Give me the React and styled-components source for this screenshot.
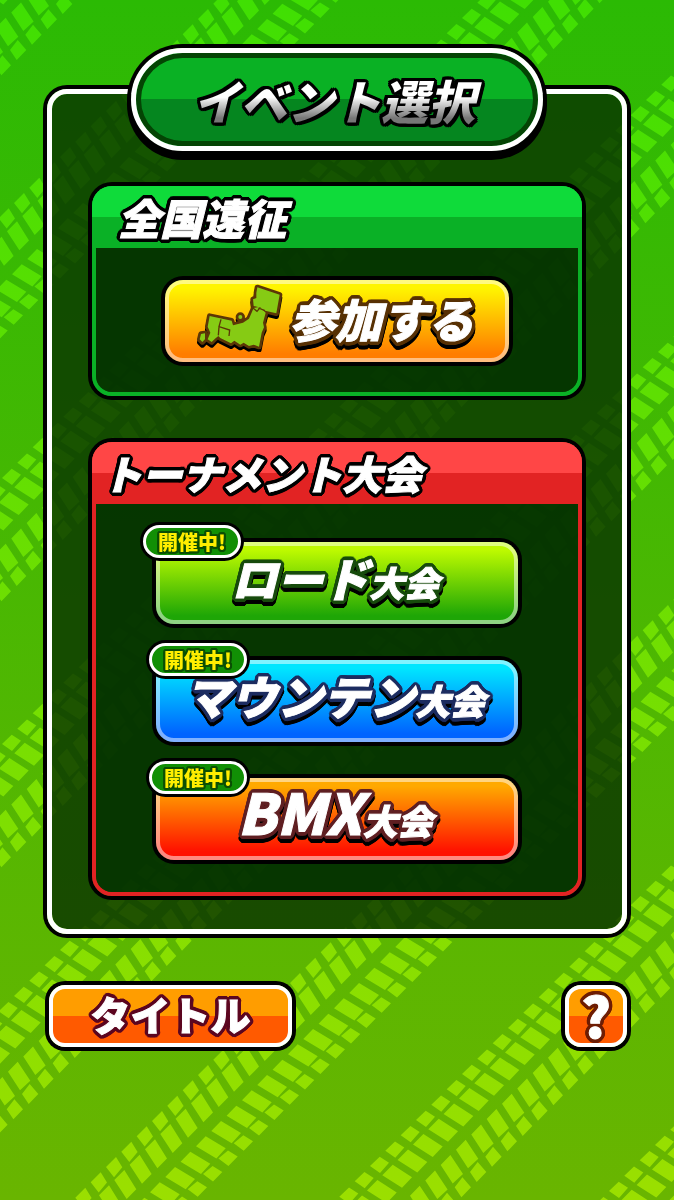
import styled, { createGlobalStyle, css } from 'styled-components';

const GlobalStyle = createGlobalStyle`
    *, *::before, *::after {
        box-sizing: border-box;
    }

    body {
        margin: 0;
        background: #4ab802;
        font-family: "Noto Sans CJK JP", "Noto Sans", sans-serif;
        font-weight: 900;
    }

    button {
        font: inherit;
        cursor: pointer;
    }
`

// ring of hard shadows, gives the text a rounded outline
function ring(radius, color, drop = 0) {
    const circle = (fill, offset) => Array.from({ length: 20 }, (_, i) => {
        const angle = (i / 20) * Math.PI * 2
        const x = (Math.cos(angle) * radius).toFixed(2)
        const y = (Math.sin(angle) * radius + offset).toFixed(2)
        return `${x}px ${y}px 0 ${fill}`
    })
    const shadows = circle(color, 0)
    if (drop) {
        shadows.push(...circle('#000', drop))
    }
    return shadows.join(', ')
}

const Backdrop = styled.svg`
    position: fixed;
    inset: 0;
    width: 100%;
    height: 100%;
    z-index: -1;
`
const Page = styled.main`
    min-height: 100vh;
    display: flex;
    flex-direction: column;
    padding: 48px 47px;
`
const outlined = css`
    color: white;
    -webkit-text-stroke: 1px white;
    text-shadow: ${props => ring(4, props.$outline || '#000', props.$drop)};
    white-space: nowrap;
`
const TitlePlate = styled.header`
    width: 71%;
    height: 103px;
    display: flex;
    align-items: center;
    justify-content: center;
    align-self: center;
    position: relative;
    z-index: 1;
    border: 5px solid white;
    border-radius: 52px;
    background: linear-gradient(#0ab124 50%, #05861f 50%);
    box-shadow: inset 0 0 0 5px #044404, 0 0 0 4px #000, 0 5px 0 4px #000;
`
const PageTitle = styled.h1`
    margin: 0;
    padding: 0 14px 0 8px;
    font-size: 47px;
    font-weight: 900;
    font-style: italic;
    line-height: 52px;
    white-space: nowrap;
    color: transparent;
    background: linear-gradient(#fff 45%, #d8d8d8 55%, #777 85%);
    background-clip: text;
    filter: drop-shadow(2px 0 0 #000) drop-shadow(-2px 0 0 #000) drop-shadow(0 2px 0 #000) drop-shadow(0 -2px 0 #000) drop-shadow(1px 1px 0 #000) drop-shadow(-1px -1px 0 #000);
`
const Panel = styled.section`
    display: flex;
    flex-direction: column;
    gap: 46px;
    margin-top: -62px;
    padding: 92px 40px 33px;
    border: 5px solid white;
    border-radius: 20px;
    background: rgba(7, 49, 0, 0.8);
    background-clip: padding-box;
    box-shadow: 0 0 0 4px #000;
`
const Card = styled.section`
    border: 4px solid ${props => props.$color};
    border-radius: 20px;
    box-shadow: 0 0 0 4px #000;
`
const CardHeader = styled.div`
    height: 62px;
    display: flex;
    align-items: center;
    margin: -4px -4px 0;
    padding-left: ${props => props.$indent}px;
    border-radius: 20px 20px 0 0;
    background: linear-gradient(${props => props.$light} 50%, ${props => props.$dark} 50%);
`
const CardTitle = styled.h2`
    ${outlined}
    margin: 0;
    font-size: ${props => props.$size}px;
    font-weight: 900;
    font-style: italic;
    line-height: 48px;
`
const CardBody = styled.div`
    display: flex;
    flex-direction: column;
    gap: 36px;
    padding: ${props => props.$wide ? '38px 60px 32px' : '32px 69px 30px'};
    border-radius: 0 0 16px 16px;
    background: rgba(3, 50, 0, 0.8);
`
const EventButton = styled.button`
    width: 100%;
    height: 82px;
    display: flex;
    align-items: center;
    justify-content: center;
    gap: 7px;
    position: relative;
    padding: 0 4px 7px 0;
    border: 4px solid rgba(255, 255, 255, 0.5);
    border-radius: 18px;
    background: linear-gradient(${props => props.$from} 10%, ${props => props.$to} 90%) border-box;
    box-shadow: 0 0 0 4px #000;
`
const EventLabel = styled.span`
    ${outlined}
    font-size: ${props => props.$size || 46}px;
    font-style: italic;
    line-height: 60px;
`
const Small = styled.small`
    font-size: 35px;
`
const Badge = styled.span`
    position: absolute;
    top: -21px;
    left: ${props => props.$left}px;
    width: 98px;
    height: 33px;
    display: flex;
    align-items: center;
    justify-content: center;
    border: 3px solid white;
    border-radius: 17px;
    background: #118f05;
    box-shadow: 0 0 0 3px #000;
    color: #ffee00;
    font-size: 20px;
    line-height: 24px;
    text-shadow: ${ring(2, '#0b4f05')};
`
const Footer = styled.footer`
    display: flex;
    justify-content: space-between;
    margin-top: 51px;
    padding-left: 2px;
`
const FooterButton = styled.button`
    width: ${props => props.$width}px;
    height: 62px;
    display: flex;
    align-items: center;
    justify-content: center;
    padding: 0 0 4px;
    border: 4px solid white;
    border-radius: 16px;
    background: linear-gradient(#ff9d00 50%, #ff5a00 50%);
    box-shadow: 0 0 0 4px #000;
`
const FooterLabel = styled.span`
    ${outlined}
    font-size: ${props => props.$size}px;
    line-height: 50px;
`
const MapIcon = styled.svg`
    width: 86px;
    height: 68px;
    flex: none;
`

// one row of tyre tread: four blocks, as offsets from the lane anchor
const treadWide = [
    [[9.7, -70.3], [19, -64.3], [10, -54], [0, -61]],
    [[22.7, -62.3], [42, -49.7], [32, -39.3], [12.3, -51.7]],
    [[49.7, -41.3], [62.3, -22.3], [52, -12.7], [40, -31.3]],
    [[61.7, -19], [70.3, -9], [60.7, 1], [54, -9]]
]
const treadTall = [
    [[10, -71], [16.3, -60.7], [8, -50.7], [0, -61]],
    [[18.3, -58], [30.3, -38.7], [20.7, -29], [8.3, -48]],
    [[23, -15], [43, -3], [33.7, 7.3], [13.3, -5]],
    [[45.3, -0.7], [55, 5.3], [45.7, 14.7], [35.7, 7.3]]
]
const lanes = [
    { sum: 15, start: 2, tread: treadWide },
    { sum: 278, start: 14, tread: treadTall },
    { sum: 541, start: 2, tread: treadWide },
    { sum: 807, start: 2, tread: treadWide },
    { sum: 1071, start: 14, tread: treadWide },
    { sum: 1334, start: 14, tread: treadTall },
    { sum: 1597, start: 2, tread: treadWide },
    { sum: 1861, start: 11, tread: treadWide }
]
const step = 46 / 3

function lanePath({ sum, start, tread }) {
    let d = ''
    for (let i = -6; i < 46; i++) {
        const x = start + i * step
        const y = sum - x
        tread.forEach(block => {
            d += 'M' + block.map(([bx, by]) => `${(x + bx).toFixed(1)} ${(y + by).toFixed(1)}`).join('L') + 'Z'
        })
    }
    return d
}

const treads = lanes.map(lanePath).join('')

const green = { light: '#0fdb3a', dark: '#0ab126' }
const red = { light: '#ff4646', dark: '#e22323' }

const races = [
    { name: 'ロード', from: '#bdfa00', to: '#1ea606', outline: '#174b0c', left: -17 },
    { name: 'マウンテン', from: '#00e6ff', to: '#0063ff', outline: '#1c2c60', left: -11 },
    { name: 'BMX', from: '#ffa900', to: '#ff1000', outline: '#5f1f22', left: -11, size: 56 }
]

function Background() {
    return (
        <Backdrop viewBox="0 0 674 1200" preserveAspectRatio="xMidYMid slice" aria-hidden="true">
            <defs>
                <linearGradient id="grass" x1="0" y1="0" x2="0" y2="1">
                    <stop offset="0" stopColor="#2bba04" />
                    <stop offset="1" stopColor="#69b500" />
                </linearGradient>
                <linearGradient id="tread" gradientUnits="userSpaceOnUse" x1="0" y1="0" x2="0" y2="1200">
                    <stop offset="0" stopColor="#40df03" />
                    <stop offset="1" stopColor="#9bdf00" />
                </linearGradient>
            </defs>
            <rect width="674" height="1200" fill="url(#grass)" />
            <path d={treads} fill="url(#tread)" />
        </Backdrop>
    )
}

function JapanMap() {
    const islands = (
        <>
            <path d="M183 14L250 36L240 92L206 84L188 74L172 70L170 50L180 46L180 30Z" />
            <path d="M172 76L190 72L208 90L200 120L203 134L196 150L188 192L172 186L158 190L142 180L132 186L114 174L104 182L72 166L66 160L56 168L46 178L34 170L42 150L34 132L40 100L106 114L110 128L140 120L158 108Z" />
            <circle cx="132" cy="103" r="6" />
            <path d="M14 154L26 152L26 170L18 178L10 170Z" />
        </>
    )
    return (
        <MapIcon viewBox="2 4 258 204" aria-hidden="true">
            <g fill="#000" stroke="#000" strokeWidth="16" strokeLinejoin="round" transform="translate(0 9)">{islands}</g>
            <g fill="#5c3606" stroke="#5c3606" strokeWidth="16" strokeLinejoin="round">{islands}</g>
            <g fill="#86cb14">{islands}</g>
            <path d="M74 110L68 132L100 142L98 160M68 132L66 158M170 76L182 86L192 74M206 84L186 76" fill="none" stroke="#5c3606" strokeWidth="4" />
        </MapIcon>
    )
}

export default function App() {
    return (
        <>
            <GlobalStyle />
            <Background />
            <Page>
                <TitlePlate>
                    <PageTitle>イベント選択</PageTitle>
                </TitlePlate>
                <Panel>
                    <Card $color={green.dark}>
                        <CardHeader $light={green.light} $dark={green.dark} $indent={26}>
                            <CardTitle $size={42}>全国遠征</CardTitle>
                        </CardHeader>
                        <CardBody>
                            <EventButton type="button" $from="#fff500" $to="#ff7d00">
                                <JapanMap />
                                <EventLabel $outline="#583104" $drop={4}>参加する</EventLabel>
                            </EventButton>
                        </CardBody>
                    </Card>
                    <Card $color={red.dark}>
                        <CardHeader $light={red.light} $dark={red.dark} $indent={10}>
                            <CardTitle $size={40}>トーナメント大会</CardTitle>
                        </CardHeader>
                        <CardBody $wide>
                            {races.map(race => (
                                <EventButton key={race.name} type="button" $from={race.from} $to={race.to}>
                                    <EventLabel $outline={race.outline} $size={race.size} $drop={4}>
                                        {race.name}<Small>大会</Small>
                                    </EventLabel>
                                    <Badge $left={race.left}>開催中!</Badge>
                                </EventButton>
                            ))}
                        </CardBody>
                    </Card>
                </Panel>
                <Footer>
                    <FooterButton type="button" $width={243}>
                        <FooterLabel $outline="#5c0620" $size={40}>タイトル</FooterLabel>
                    </FooterButton>
                    <FooterButton type="button" $width={62} aria-label="ヘルプ">
                        <FooterLabel $outline="#6e1d04" $size={56}>?</FooterLabel>
                    </FooterButton>
                </Footer>
            </Page>
        </>
    )
}
